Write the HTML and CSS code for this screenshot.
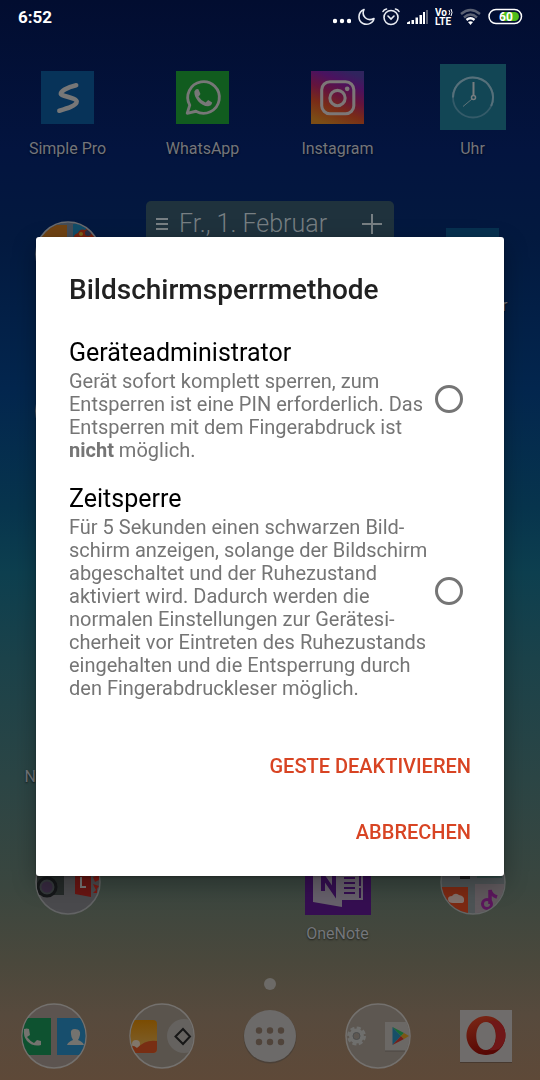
FILE: index.html
```html
<!DOCTYPE html>
<html lang="de">
<head>
<meta charset="utf-8">
<meta name="viewport" content="width=device-width, initial-scale=1">
<title>Bildschirmsperrmethode</title>
<link rel="stylesheet" href="styles.css">
</head>
<body>
<header class="status">
  <time class="clock">6:52</time>
  <div class="status-icons">
    <svg width="18" height="20" viewBox="0 0 18 20" fill="#fff"><circle cx="2" cy="14" r="2.200"/><circle cx="9" cy="14" r="2.200"/><circle cx="16" cy="14" r="2.200"/></svg>
    <svg width="17" height="20" viewBox="0 0 17 20" fill="none" stroke="#e8ebf2" stroke-width="1.600" stroke-linejoin="round"><path d="M6 2.500C-.5 5-.5 14 5 16.500C10 18.800 15.500 15.500 16 11.500C9 15 3 9 6 2.500Z"/></svg>
    <svg width="18" height="20" viewBox="0 0 18 20" fill="none" stroke="#e8ebf2" stroke-width="1.600" stroke-linecap="round"><circle cx="9" cy="10.500" r="7"/><path d="M6 9L9 12L12 9M1 4.500Q2 2.500 4.500 2M17 4.500Q16 2.500 13.500 2"/></svg>
    <svg width="21" height="20" viewBox="0 0 21 20" fill="#fff"><path d="M0 17V15.500L3 14V17ZM4.500 17V13H7V17ZM8.500 17V10.500H11V17ZM12.500 17V8H15V17ZM16 17V5H18V17Z"/><path d="M19 17V3H21V17Z" fill="#5c6273"/></svg>
    <svg class="volte" width="18" height="20" viewBox="0 0 18 20" fill="#fff"><text x="0" y="9">Vo</text><text x="0" y="18">LTE</text><path d="M14 3Q15.500 5.500 14 8M16 2Q18 5.500 16 9" fill="none" stroke="#fff"/></svg>
    <svg width="21" height="20" viewBox="0 0 21 20" fill="none" stroke-width="2.400"><path d="M1 7Q10.500-1 20 7M4 10.500Q10.500 4.500 17 10.500" stroke="#5c6273"/><path d="M6.500 13Q10.500 9.500 14.500 13" stroke="#fff"/><path d="M8 15Q10.500 13.500 13 15L10.500 18Z" fill="#fff"/></svg>
    <svg class="battery" width="35" height="20" viewBox="0 0 35 20"><rect x="1" y="2.500" width="32.500" height="14" rx="7" fill="none" stroke="#fff" stroke-width="1.500"/><path d="M14 5H26.500A4.500 4.500 0 0 1 26.500 14H14Z" fill="#4fbe1c"/><text x="11" y="14">60</text></svg>
  </div>
</header>

<main class="home">
  <section class="apps">
    <div class="app">
      <span class="tile"><svg width="53" height="53" viewBox="0 0 52 52"><path d="M0 0H52V52H0Z" fill="#073359"/><path d="M34.500 14C25 16 19 20 19.500 22.500C20 25 35 26 35 30C35 34 25 37 18 39" fill="none" stroke="#777" stroke-width="4.500" stroke-linecap="round"/></svg></span>
      <span class="label">Simple Pro</span>
    </div>
    <div class="app">
      <span class="tile"><svg width="53" height="53" viewBox="0 0 52 52"><path d="M0 0H52V52H0Z" fill="#115c1f"/><path d="M11 41.500L13.500 33.500A15.500 15.500 0 1 1 19.500 39.500Z" fill="none" stroke="#777" stroke-width="2.800" stroke-linejoin="round"/><path d="M18 20Q20 16.500 22 18L24 22.500Q23 24 22 25Q25 29.500 29 31Q30 30 31.500 28.500L35.500 31Q35 34.500 31.500 34.500C24 34.500 17.500 26 18 20Z" fill="#777"/></svg></span>
      <span class="label">WhatsApp</span>
    </div>
    <div class="app">
      <span class="tile"><svg width="53" height="53" viewBox="0 0 52 52"><defs><linearGradient id="ig" x1=".3" y1="1" x2=".7" y2="0"><stop offset="0" stop-color="#7b4c15"/><stop offset=".3" stop-color="#792b17"/><stop offset=".55" stop-color="#65143c"/><stop offset=".8" stop-color="#4a1260"/><stop offset="1" stop-color="#30245e"/></linearGradient></defs><path d="M0 0H52V52H0Z" fill="url(#ig)"/><g fill="none" stroke="#7c7777" stroke-width="3"><rect x="10.500" y="10.500" width="31.500" height="31.500" rx="8"/><circle cx="26" cy="26.500" r="7.500"/></g><circle cx="35.500" cy="17.500" r="2.300" fill="#7c7777"/></svg></span>
      <span class="label">Instagram</span>
    </div>
    <div class="app">
      <span class="tile"><svg width="66" height="66" viewBox="0 0 66 66"><path d="M0 0H66V66H0Z" fill="#124655"/><g fill="none" stroke="#777d80"><circle cx="33" cy="33.500" r="20" stroke-width="1.800" stroke="#345b69"/><path d="M13 33.500A20 20 0 1 1 51.100 42" stroke-width="2" stroke="#56707a"/><path d="M33.500 18V31" stroke-width="2"/><path d="M32 35L23 42.500" stroke="#5f7378"/><circle cx="33.500" cy="33.500" r="2" stroke-width="1.500"/></g></svg></span>
      <span class="label">Uhr</span>
    </div>

    <div class="app row-2">
      <span class="tile"><svg width="66" height="66" viewBox="0 0 66 66"><defs><clipPath id="disc"><circle cx="33" cy="33" r="31.500"/></clipPath></defs><g clip-path="url(#disc)"><path d="M0 0H66V66H0Z" fill="#444d58"/><path d="M0 4H32V66H0Z" fill="#704313"/><path d="M38 3H66V66H38Z" fill="#114d69"/><path d="M38 20Q38 13 43 12Q45 7 50 9Q54 5 61 14L58 22H42Z" fill="#78210e"/><circle cx="53" cy="12" r="3" fill="#292e44"/><circle cx="46" cy="13" r="2" fill="#7b641a"/></g><circle cx="33" cy="33" r="32" fill="none" stroke="#6a6c70" stroke-width="1.500"/></svg></span>
    </div>
    <div class="widget">
      <svg width="12" height="16" viewBox="0 0 12 16"><path d="M0 3H12M0 8H12M0 13H12" stroke="#777f83" stroke-width="2"/></svg>
      <span class="date">Fr., 1. Februar</span>
      <svg width="20" height="20" viewBox="0 0 20 20"><path d="M0 10H20M10 0V20" stroke="#777f83" stroke-width="2"/></svg>
    </div>
    <div class="app row-2 last">
      <span class="tile"><svg width="53" height="53" viewBox="0 0 52 52"><path d="M0 0H52V52H0Z" fill="#073150"/></svg></span>
      <span class="label clipped-end">r</span>
    </div>

    <div class="app row-3">
      <span class="tile"><svg width="66" height="66" viewBox="0 0 66 66"><circle cx="33" cy="33" r="32" fill="#444" stroke="#777" stroke-width="1.500"/></svg></span>
    </div>
    <div class="app row-5">
      <span class="tile"></span>
      <span class="label clipped-start">N</span>
    </div>

    <div class="app row-6">
      <span class="tile"><svg width="66" height="66" viewBox="0 0 66 66"><circle cx="33" cy="33" r="32" fill="#4a4a4d" stroke="#626364" stroke-width="1.500"/><g clip-path="url(#disc)"><path d="M2 20H29V46H2Z" fill="#252a29"/><circle cx="12" cy="38" r="10.500" fill="#151719"/><circle cx="12" cy="38" r="6.500" fill="#36293f" stroke="#34383b" stroke-width="2"/><path d="M40 20L56 22V48L40 45Z" fill="#691512"/><path d="M46 28V38H51" fill="none" stroke="#777" stroke-width="2"/><path d="M58 28L64 26V31L60 33ZM58 35L64 37L61 41ZM58 44L62 40V44Z" fill="#7c1811"/></g></svg></span>
    </div>
    <div class="app row-6 third">
      <span class="tile"><svg width="66" height="66" viewBox="0 0 66 66"><path d="M0 0H66V66H0Z" fill="#350e51"/><path d="M37 12H54V51H37Z" fill="#66606b"/><path d="M54 14H57V50H54M54 26H57M54 38H57" fill="none" stroke="#66606b" stroke-width="2"/><path d="M39 29H50M39 34H50M39 39H50M39 44H50" stroke="#350e51" stroke-width="2"/><path d="M8 14L37 9V58L8 53Z" fill="#66606b"/><path d="M18 42V27L29 43V27" fill="none" stroke="#350e51" stroke-width="4"/></svg></span>
      <span class="label">OneNote</span>
    </div>
    <div class="app row-6 last">
      <span class="tile"><svg width="66" height="66" viewBox="0 0 66 66"><circle cx="33" cy="33" r="32" fill="#4d5355" stroke="#626565" stroke-width="1.500"/><g clip-path="url(#disc)"><path d="M20 20H30V30H20Z" fill="#1c1e1e"/><path d="M37 28H62" stroke="#334c49" stroke-width="2"/><path d="M2 38H28V64H2Z" fill="#7c2913"/><path d="M35 35H66V66H35Z" fill="#60595d"/><path d="M13 54Q8 54 8 50Q8 47 12 47Q15 43 19 46Q25 47 24 52Q24 54 21 54Z" fill="#81706b"/><circle cx="47" cy="55" r="4.500" fill="none" stroke="#5b165c" stroke-width="3"/><path d="M50 55V41Q51 46 57 48" fill="none" stroke="#5b165c" stroke-width="3.500"/></g></svg></span>
    </div>
  </section>

  <span class="page-dot"></span>

  <nav class="dock">
    <svg width="66" height="66" viewBox="0 0 66 66"><circle cx="33" cy="33" r="32" fill="#5c5450" stroke="#74716e" stroke-width="1.500"/><g clip-path="url(#disc)"><path d="M0 15H30V52H0Z" fill="#0e5230"/><path d="M36 15H66V52H36Z" fill="#174e6d"/><path d="M3 26Q6 25 8 26L9 32L6 34Q9 38 13 40L16 37L20 38V42Q12 44 6 38Q2 33 3 26Z" fill="#74736f"/><path d="M50 31Q49 26 54 26Q60 26 59 32Q58 36 57 37Q62 39 63 42H46Q47 39 52 37Q50 34 50 31Z" fill="#74736f"/></g></svg>
    <svg width="66" height="66" viewBox="0 0 66 66"><defs><linearGradient id="sun" x1="0" y1="0" x2="0" y2="1"><stop offset="0" stop-color="#7b4c02"/><stop offset="1" stop-color="#7d6334"/></linearGradient></defs><circle cx="33" cy="33" r="32" fill="#5a544d" stroke="#74716e" stroke-width="1.500"/><g clip-path="url(#disc)"><rect x="-6" y="17" width="34" height="33" rx="4" fill="url(#sun)"/><circle cx="7" cy="41" r="4" fill="#81766a"/><path d="M0 43Q5 42 8 45Q17 36 28 38V46Q28 50 24 50H0Z" fill="#782e13"/><circle cx="55" cy="33" r="17" fill="#65625f"/><path d="M54 26L61 33.500L54 41L46.500 33.500Z" fill="none" stroke="#171717" stroke-width="2"/></g></svg>
    <svg width="66" height="66" viewBox="0 0 66 66"><circle cx="33" cy="34" r="26.500" fill="#4b4037"/><circle cx="33" cy="33" r="26" fill="#6c6a69"/><g fill="#50443b"><circle cx="22" cy="27.500" r="3.200"/><circle cx="33" cy="27.500" r="3.200"/><circle cx="44" cy="27.500" r="3.200"/><circle cx="22" cy="39" r="3.200"/><circle cx="33" cy="39" r="3.200"/><circle cx="44" cy="39" r="3.200"/></g></svg>
    <svg width="66" height="66" viewBox="0 0 66 66"><circle cx="33" cy="33" r="32" fill="#5d5751" stroke="#74716e" stroke-width="1.500"/><g clip-path="url(#disc)"><circle cx="11.500" cy="33" r="8" fill="none" stroke="#6f6f6d" stroke-width="3" stroke-dasharray="4 2.280"/><circle cx="11.500" cy="33" r="5.500" fill="none" stroke="#6f6f6d" stroke-width="4"/><circle cx="11.500" cy="33" r="3.500" fill="#5d5751" stroke="#4d4e4f"/><path d="M40 19H66V48H40Z" fill="#6b6865"/><path d="M40 48H60" stroke="#4d4742"/><path d="M47.500 24V42L56 33Z" fill="#174f68"/><path d="M47.500 24L59 30L56 33Z" fill="#176b35"/><path d="M47.500 42L59 36L56 33Z" fill="#751f1a"/><path d="M59 30L64 33L59 36L56 33Z" fill="#7b5713"/></g></svg>
    <svg width="66" height="66" viewBox="0 0 66 66"><defs><linearGradient id="op" x1="0" y1="0" x2=".3" y2="1"><stop offset="0" stop-color="#7c2816"/><stop offset="1" stop-color="#570804"/></linearGradient></defs><path d="M7 8H59V60H7Z" fill="#47392f"/><path d="M7 7H59V59H7Z" fill="#6f6c6b"/><path fill-rule="evenodd" d="M33 13A19.500 19.500 0 1 1 32.900 13ZM33 19C20 19 20 47 33 47C46 47 46 19 33 19Z" fill="url(#op)"/><path d="M35 19C46 21 46 44 35 47Q41 48 46 46Q53 40 52.500 31Q52 23 46 19Q40 16 35 19Z" fill="#701718"/></svg>
  </nav>
</main>

<div class="overlay">
  <form class="dialog" role="dialog" aria-labelledby="dialog-title">
    <h1 id="dialog-title">Bildschirmsperrmethode</h1>
    <div class="options">
      <label class="option">
        <span class="option-text">
          <span class="option-title">Geräteadministrator</span>
          <span class="option-body">Gerät sofort komplett sperren, zum<br>Entsperren ist eine PIN erforderlich. Das<br>Entsperren mit dem Fingerabdruck ist<br><b>nicht</b> möglich.</span>
        </span>
        <input class="radio" type="radio" name="method" value="admin">
      </label>
      <label class="option">
        <span class="option-text">
          <span class="option-title">Zeitsperre</span>
          <span class="option-body">Für 5 Sekunden einen schwarzen Bild-<br>schirm anzeigen, solange der Bildschirm<br>abgeschaltet und der Ruhezustand<br>aktiviert wird. Dadurch werden die<br>normalen Einstellungen zur Gerätesi-<br>cherheit vor Eintreten des Ruhezustands<br>eingehalten und die Entsperrung durch<br>den Fingerabdruckleser möglich.</span>
        </span>
        <input class="radio" type="radio" name="method" value="timeout">
      </label>
    </div>
    <div class="actions">
      <button class="action" type="button">GESTE DEAKTIVIEREN</button>
      <button class="action" type="button">ABBRECHEN</button>
    </div>
  </form>
</div>
</body>
</html>
```
FILE: styles.css
```css
* { box-sizing: border-box; }

body {
  margin: 0;
  min-height: 100vh;
  display: flex;
  flex-direction: column;
  font-family: Roboto, "Noto Sans", sans-serif;
  background: linear-gradient(#020d30 0%, #03143f 14%, #03193f 22%, #03264e 36%, #07344d 47%, #0d3f4f 53%, #1b424a 61%, #2b4545 72%, #3a463f 82%, #4a483c 89%, #574a3d 94%, #5e4938 100%);
}

svg { display: block; flex: none; }

.status {
  display: flex;
  align-items: center;
  justify-content: space-between;
  height: 34px;
  padding: 0 17px 0 18px;
  color: #fff;
}
.clock { font-size: 17px; font-weight: 700; line-height: 20px; }
.status-icons { display: flex; gap: 7px; }
.volte { font-size: 10px; font-weight: 700; }
.battery { font-size: 12px; font-weight: 700; fill: #fff; }

.home { flex: 1; display: flex; flex-direction: column; }

.apps {
  display: grid;
  grid-template-columns: repeat(4, 1fr);
  grid-auto-rows: 95px;
  row-gap: 62px;
  padding-top: 30px;
}
.app { display: flex; flex-direction: column; align-items: center; gap: 9px; }
.tile { display: flex; align-items: center; justify-content: center; height: 66px; }
.label {
  font-size: 16px;
  line-height: 20px;
  color: #74767b;
  text-shadow: 0 1px 2px rgba(0, 0, 0, 0.6);
}
.clipped-end { width: 70px; text-align: right; }
.clipped-start { width: 86px; text-align: left; }

.row-2 { grid-area: 2 / 1; }
.row-3 { grid-area: 3 / 1; }
.row-5 { grid-area: 5 / 1; }
.row-6 { grid-area: 6 / 1; }
.third { grid-column: 3; }
.last { grid-column: 4; }

.widget {
  grid-area: 2 / 2 / auto / span 2;
  display: flex;
  align-items: center;
  gap: 11px;
  height: 44px;
  margin: -20px 11px 0;
  padding: 2px 12px 0 10px;
  border-radius: 5px;
  background: #1f323d;
}
.date { flex: 1; font-size: 25px; font-weight: 300; line-height: 30px; color: #777f83; }

.page-dot {
  align-self: center;
  width: 12px;
  height: 12px;
  margin-top: 34px;
  border-radius: 50%;
  background: #6c6a67;
}
.dock {
  display: grid;
  grid-template-columns: repeat(5, 1fr);
  justify-items: center;
  padding: 13px 0 11px;
}

.overlay {
  position: fixed;
  inset: 32px 0 0;
  display: flex;
  align-items: center;
  padding: 0 36px;
}
.dialog {
  flex: 1;
  padding: 37px 33px 20px;
  border-radius: 3px;
  background: #fff;
  box-shadow: 0 8px 24px rgba(0, 0, 0, 0.3), 0 1px 3px rgba(0, 0, 0, 0.3);
}
h1 { margin: 0 0 32px; font-size: 28px; font-weight: 500; line-height: 32px; color: #212121; }

.options { display: flex; flex-direction: column; gap: 22px; }
.option { display: flex; align-items: center; justify-content: space-between; }
.option-text { display: flex; flex-direction: column; gap: 2px; white-space: nowrap; }
.option-title { font-size: 25px; line-height: 30px; color: #000; }
.option-body { font-size: 20px; line-height: 23px; color: #757575; }

.radio {
  appearance: none;
  flex: none;
  width: 28px;
  height: 28px;
  margin: 0 8px 2px 0;
  border: 3px solid #757575;
  border-radius: 50%;
}

.actions { display: flex; flex-direction: column; align-items: flex-end; gap: 18px; margin-top: 42px; }
.action {
  height: 48px;
  padding: 0;
  border: 0;
  background: none;
  font: 500 20px/24px Roboto, "Noto Sans", sans-serif;
  color: #d84423;
}
```
